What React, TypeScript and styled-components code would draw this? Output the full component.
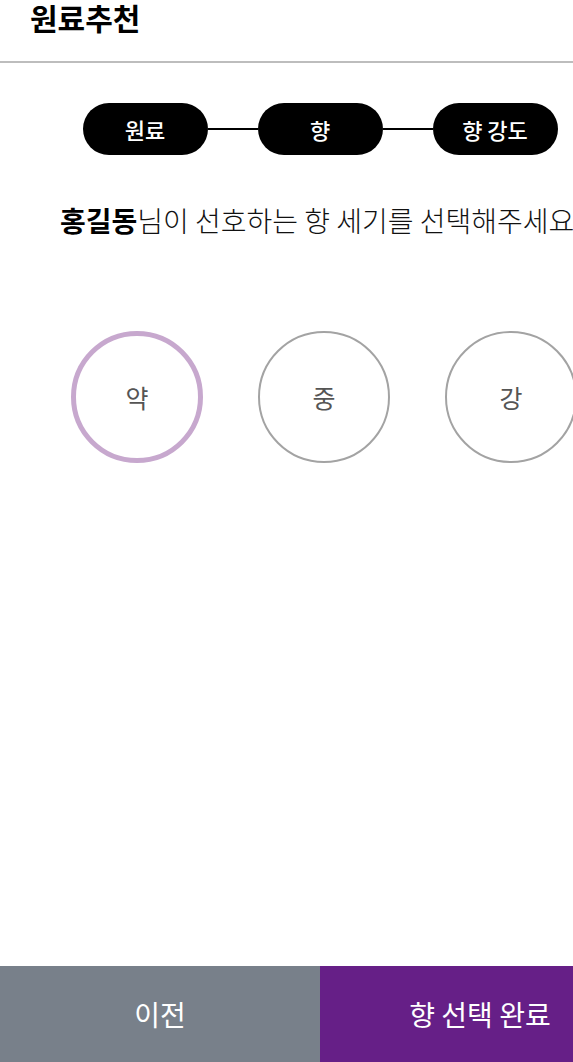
import React, { useState } from "react";
import styled, { createGlobalStyle } from "styled-components";

const Global = createGlobalStyle`
  html, body {
    margin: 0;
    padding: 0;
    overflow: hidden;
    background: #fff;
  }
  body {
    font-family: "Noto Sans CJK KR", "Noto Sans", sans-serif;
    color: #000;
  }
`;

const Page = styled.div`
  width: 640px;
  height: 1062px;
  display: flex;
  flex-direction: column;
  position: relative;
`;

const Header = styled.header`
  height: 61px;
  border-bottom: 2px solid #bdbdbd;
  display: flex;
  align-items: flex-start;
  padding-left: 30px;
`;

const Title = styled.h1`
  margin: 0;
  font-size: 30px;
  font-weight: 700;
  line-height: 34px;
`;

const Steps = styled.div`
  margin-top: 40px;
  display: flex;
  align-items: center;
  justify-content: center;
`;

const Pill = styled.div`
  width: 125px;
  height: 52px;
  border-radius: 26px;
  background: #000;
  color: #fff;
  display: flex;
  align-items: center;
  justify-content: center;
  font-size: 22px;
  font-weight: 500;
`;

const Connector = styled.div`
  width: 50px;
  height: 2px;
  background: #000;
`;

const Question = styled.p`
  margin: 45px 0 0 60px;
  font-size: 28px;
  font-weight: 200;
  line-height: 40px;
  white-space: nowrap;
  color: #111;
  b {
    font-weight: 700;
    color: #000;
  }
`;

const Options = styled.div`
  margin-top: 91px;
  padding-left: 71px;
  display: flex;
  gap: 55px;
`;

const Option = styled.button<{ $active: boolean }>`
  box-sizing: border-box;
  width: 132px;
  height: 132px;
  border-radius: 50%;
  background: #fff;
  border: ${(p) => (p.$active ? "5px solid #c7a8ce" : "2px solid #a3a3a3")};
  color: #555;
  font-family: inherit;
  font-size: 25px;
  font-weight: 400;
  display: flex;
  align-items: center;
  justify-content: center;
  padding: 0;
  cursor: pointer;
`;

const BottomBar = styled.div`
  position: absolute;
  left: 0;
  right: 0;
  bottom: 0;
  height: 96px;
  display: grid;
  grid-template-columns: 1fr 1fr;
`;

const BarButton = styled.button<{ $primary?: boolean }>`
  border: none;
  background: ${(p) => (p.$primary ? "#661f87" : "#78808a")};
  color: #fff;
  font-family: inherit;
  font-size: 28px;
  font-weight: 400;
  display: flex;
  align-items: center;
  justify-content: center;
  padding: 0;
`;

export default function App() {
  const [sel, setSel] = useState(0);
  const opts = ["약", "중", "강"];
  return (
    <Page>
      <Global />
      <Header>
        <Title>원료추천</Title>
      </Header>
      <Steps>
        <Pill>원료</Pill>
        <Connector />
        <Pill>향</Pill>
        <Connector />
        <Pill>향 강도</Pill>
      </Steps>
      <Question>
        <b>홍길동</b>님이 선호하는 향 세기를 선택해주세요
      </Question>
      <Options>
        {opts.map((o, i) => (
          <Option key={o} $active={sel === i} onClick={() => setSel(i)}>
            {o}
          </Option>
        ))}
      </Options>
      <BottomBar>
        <BarButton>이전</BarButton>
        <BarButton $primary>향 선택 완료</BarButton>
      </BottomBar>
    </Page>
  );
}
